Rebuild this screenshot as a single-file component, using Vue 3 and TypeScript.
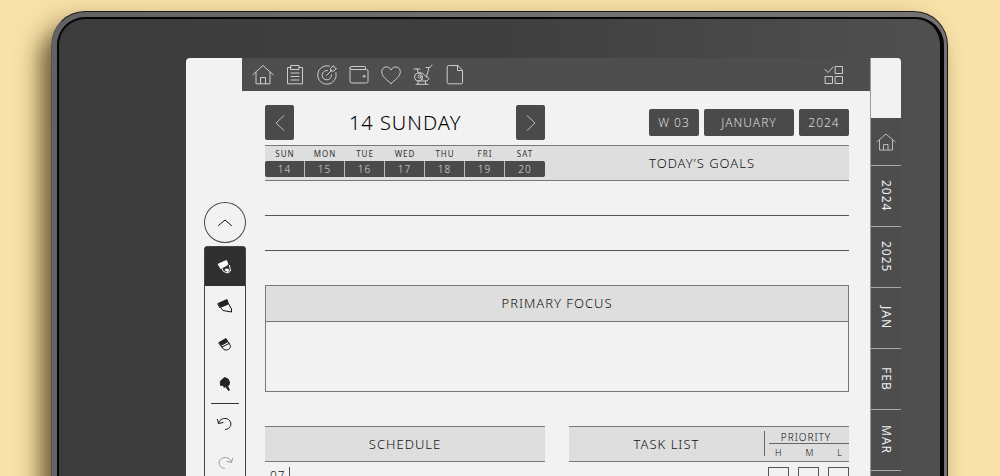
<script setup lang="ts">
import { ref } from 'vue'

interface Day { name: string; date: number }

const week: Day[] = [
  { name: 'SUN', date: 14 },
  { name: 'MON', date: 15 },
  { name: 'TUE', date: 16 },
  { name: 'WED', date: 17 },
  { name: 'THU', date: 18 },
  { name: 'FRI', date: 19 },
  { name: 'SAT', date: 20 },
]
const tabs: string[] = ['2024', '2025', 'JAN', 'FEB', 'MAR']
const pills: string[] = ['W 03', 'JANUARY', '2024']
const levels = ['H', 'M', 'L'] as const
const priority = ref<Record<string, boolean>>({ H: false, M: false, L: false })
</script>

<template>
  <div class="desk">
    <div class="device">
      <div class="surface">
        <main class="screen">
          <aside class="tools">
            <button class="collapse" aria-label="Collapse tools">
              <svg width="16" height="10" viewBox="0 0 16 10"><path d="M1.5 7.5 8 2l6.500 5.500" /></svg>
            </button>
            <div class="toolbox">
              <button class="tool selected" aria-label="Pen">
                <svg width="20" height="20" viewBox="0 0 20 20">
                  <path d="M3.500 7 11.500 3.500l1.500 4-7 4z" fill="#fff" stroke="#fff" />
                  <path d="m7 11.500 1.500 3 4.500 1.500 2.500-2-1-5.500" fill="#303030" stroke="#fff" />
                  <path d="m9.500 13 1.500-1.500 2.500.500 1 2-2 1z" fill="#fff" stroke="none" />
                </svg>
              </button>
              <button class="tool" aria-label="Highlighter">
                <svg width="20" height="20" viewBox="0 0 20 20">
                  <path d="M3 7.500 12 3.500l1.500 4.500-8.500 3.500z" fill="#222" stroke="#222" />
                  <path d="m6 12 2 2.500 8.500 1.500V13L14 8.500" />
                </svg>
              </button>
              <button class="tool" aria-label="Eraser">
                <svg width="20" height="20" viewBox="0 0 20 20">
                  <path d="M4 7.500 11 3.500l1.500 2.500-7 4z" fill="#222" stroke="#222" />
                  <path d="m6 10.500 7-4 2.300 4c1 3-3.300 6-6.300 4zM7 12l7-3.500" />
                </svg>
              </button>
              <button class="tool" aria-label="Select">
                <svg width="20" height="20" viewBox="0 0 20 20">
                  <path d="m5.500 7 4-3.500 3.500 1.500 1.500 3-.5 3-1.500 1 2 4-1 .500-3-4-1.500 1-.5-2.500-2.500.500z" fill="#222" stroke="#222" />
                </svg>
              </button>
              <hr class="tool-rule">
              <button class="tool" aria-label="Undo">
                <svg width="20" height="20" viewBox="0 0 20 20"><path d="M3.500 9C5 5 9 3.500 12.500 5s4.500 6 2 8.500c-1 1-2 1.700-4 2M2.500 5.500l1 4 4.500-1" /></svg>
              </button>
              <button class="tool faded" aria-label="Redo">
                <svg width="20" height="20" viewBox="0 0 20 20"><path d="M16.500 9C15 5 11 3.500 7.500 5s-4.500 6-2 8.500c1 1 2 1.700 4 2M17.500 5.500l-1 4-4.500-1" /></svg>
              </button>
            </div>
          </aside>

          <section class="page">
            <nav class="topbar" aria-label="Sections">
              <a href="#home" aria-label="Home">
                <svg width="22" height="22" viewBox="0 0 22 22"><path d="M.8 10.700 11 1.500l10.200 9.200M4 8.500v11.300h14V8.500M8.500 19.800v-6.300h5v6.300" /></svg>
              </a>
              <a href="#lists" aria-label="Lists">
                <svg width="22" height="22" viewBox="0 0 22 22"><path d="M7 3.500H3.500v16.300h15V3.500H15M7 1.500h8v4H7zM7 9h8M7 12.500h8M7 16h8" /></svg>
              </a>
              <a href="#targets" aria-label="Targets">
                <svg width="22" height="22" viewBox="0 0 22 22"><path d="M13.500 2A9.300 9.300 0 1 0 20 8.700M11.500 6.500a4.700 4.700 0 1 0 4 4.200M10.500 11.500l5-5M15 4l2.500-2.500.8 2.200 2.200.8L18 7h-3z" /></svg>
              </a>
              <a href="#budget" aria-label="Budget">
                <svg width="22" height="22" viewBox="0 0 22 22"><path d="M17.500 5.500V3.300q0-.8-.8-.8H4Q2 2.500 2 4V17q0 2 2 2h14.500q1.500 0 1.500-1.500V7q0-1.500-1.500-1.500H4Q2 5.500 2 4" /><circle cx="16" cy="12.300" r="1" /></svg>
              </a>
              <a href="#health" aria-label="Health">
                <svg width="22" height="22" viewBox="0 0 22 22"><path d="M11 19.500C7 16 1.700 12.500 1.700 7.800 1.700 2.500 8.500 1 11 6c2.500-5 9.300-3.500 9.300 1.800 0 4.700-5.300 8.200-9.300 11.700z" /></svg>
              </a>
              <a href="#workout" aria-label="Workout">
                <svg width="22" height="22" viewBox="0 0 22 22"><path d="M2 5h6M5 5l1.500 4M14 3.500h4L20 1M17 3.500 14.500 13M6.500 9C11 7.500 11 11 16 13.500c2 1 0 3.500-2.500 3.500H6.500M4 20.300h12M6 17.500v2.500M13.500 17v3" /><circle cx="6.500" cy="13" r="4" /><circle cx="7.500" cy="12.500" r="1.500" /><path d="m8.500 14 2 1.500" /></svg>
              </a>
              <a href="#notes" aria-label="Notes">
                <svg width="22" height="22" viewBox="0 0 22 22"><path d="M13.500 1.500H4.500q-1.300 0-1.300 1.300v15.700q0 1.300 1.300 1.300h12.700q1.300 0 1.300-1.300v-12zM13.500 1.500v5h5" /></svg>
              </a>
              <a class="last" href="#overview" aria-label="Overview">
                <svg width="22" height="22" viewBox="0 0 22 22"><path d="m2 5.500 3 3L10 3M12.500 2.500h7v7h-7zM2.500 12.500h7v7h-7zM12.500 12.500h7v7h-7z" /></svg>
              </a>
            </nav>

            <div class="content">
              <header class="heading">
                <div class="day">
                  <button class="arrow" aria-label="Previous day">
                    <svg width="12" height="18" viewBox="0 0 12 18"><path d="M10 1.500 2 9l8 7.500" /></svg>
                  </button>
                  <h1>14 SUNDAY</h1>
                  <button class="arrow" aria-label="Next day">
                    <svg width="12" height="18" viewBox="0 0 12 18"><path d="m2 1.500 8 7.500-8 7.500" /></svg>
                  </button>
                </div>
                <div class="pills">
                  <button v-for="p in pills" :key="p" class="pill">{{ p }}</button>
                </div>
              </header>

              <div class="band split">
                <div class="week">
                  <div v-for="d in week" :key="d.date" class="weekday">
                    <span>{{ d.name }}</span>
                    <a :href="`#day-${d.date}`">{{ d.date }}</a>
                  </div>
                </div>
                <h2 class="goals">TODAY’S GOALS</h2>
              </div>
              <div class="line"></div>
              <div class="line"></div>

              <section class="focus">
                <h2>PRIMARY FOCUS</h2>
                <div class="focus-body"></div>
              </section>

              <div class="split lower">
                <section>
                  <div class="band centred"><h2>SCHEDULE</h2></div>
                  <div class="hour"><span>07</span></div>
                </section>
                <section>
                  <div class="band tasks">
                    <h2>TASK LIST</h2>
                    <div class="priority">
                      <div class="priority-title">PRIORITY</div>
                      <div class="levels"><span v-for="l in levels" :key="l">{{ l }}</span></div>
                    </div>
                  </div>
                  <div class="checks">
                    <input v-for="l in levels" :key="l" v-model="priority[l]" type="checkbox" :aria-label="`Priority ${l}`">
                  </div>
                </section>
              </div>
            </div>
          </section>

          <nav class="tabs" aria-label="Calendar">
            <div class="blank"></div>
            <a class="tab home" href="#home" aria-label="Home">
              <svg width="20" height="20" viewBox="0 0 20 20"><path d="M1 9.700 10 2l9 7.700M3.500 8v10h13V8M7.500 18v-5.500h4.500V18" /></svg>
            </a>
            <a v-for="t in tabs" :key="t" class="tab" :href="`#${t}`">{{ t }}</a>
          </nav>
        </main>
      </div>
    </div>
  </div>
</template>

<style>
body {
  background: #f9e2a9;
}
</style>

<style scoped>
.desk {
  box-sizing: border-box;
  height: 100vh;
  padding: 11px 52px 0 51px;
  overflow: hidden;
  background: #f9e2a9;
  color: #111;
  font: 300 13px/18px "Noto Sans", "Open Sans", sans-serif;
}
.desk * {
  box-sizing: border-box;
}
.device {
  min-height: 120vh;
  padding: 5px 3px 0 5px;
  border: 1px solid #1c1c1c;
  border-left-color: #555;
  border-radius: 34px;
  background: linear-gradient(100deg, #626262, #707070 50%, #777173);
  box-shadow: -10px 16px 20px rgba(60, 45, 10, 0.65), -12px 5px 30px rgba(80, 60, 20, 0.2);
}
.surface {
  min-height: 120vh;
  padding: 39px 39px 0 127px;
  border: 2px solid #050505;
  border-right-width: 4px;
  border-radius: 28px;
  background: linear-gradient(90deg, #3c3c3c, #3f3f3f 50%, #505050);
}
.screen {
  display: flex;
  min-height: 120vh;
  border-radius: 4px;
  overflow: hidden;
  background: #f2f2f2;
}
svg {
  display: block;
  fill: none;
  stroke: currentColor;
  stroke-width: 1;
  stroke-linejoin: round;
  stroke-linecap: round;
}
button {
  display: flex;
  align-items: center;
  justify-content: center;
  padding: 0;
  border: 0;
  background: none;
  color: inherit;
  font: inherit;
}
a {
  color: inherit;
  text-decoration: none;
}
h1,
h2 {
  margin: 0;
  font-weight: 300;
  text-align: center;
}
h1 {
  font-size: 20px;
  line-height: 35px;
  letter-spacing: 1px;
  color: #000;
}
h2 {
  font-size: 13px;
  line-height: 34px;
  letter-spacing: 1px;
}

/* drawing tools */
.tools {
  display: flex;
  flex-direction: column;
  width: 56px;
  padding: 144px 0 0 18px;
  flex-shrink: 0;
}
.tools > * {
  width: 42px;
}
.collapse {
  height: 41px;
  margin-bottom: 3px;
  border: 1px solid #444;
  border-radius: 50%;
}
.toolbox {
  flex: 1;
  border: 1px solid #444;
  border-radius: 3px;
}
.tool {
  width: 100%;
  height: 39px;
}
.tool.selected {
  background: #303030;
}
.tool.faded {
  color: #999;
}
.tool-rule {
  height: 1px;
  margin: 0 6px;
  border: 0;
  background: #333;
}

/* planner page */
.page {
  flex: 1;
  min-width: 0;
}
.topbar {
  display: flex;
  align-items: center;
  gap: 10px;
  height: 33px;
  padding: 0 25px 0 10px;
  background: #4e4e4e;
  color: #ccc;
}
.topbar .last {
  margin-left: auto;
}
.content {
  padding: 14px 21px 0 23px;
}
.heading {
  display: flex;
  justify-content: space-between;
  align-items: center;
  margin-bottom: 5px;
}
.day {
  display: flex;
  justify-content: space-between;
  width: 48%;
}
.arrow {
  width: 29px;
  height: 35px;
  border-radius: 2px;
  background: #4a4a4a;
  color: #bbb;
}
.pills {
  display: grid;
  grid-template-columns: 50px 90px 50px;
  gap: 5px;
}
.pill {
  height: 27px;
  border-radius: 2px;
  background: #4a4a4a;
  color: #ddd;
  font-size: 12px;
  letter-spacing: 1px;
}
.split {
  display: grid;
  grid-template-columns: 1fr 1fr;
  column-gap: 24px;
}
.band {
  height: 36px;
  border: solid #777;
  border-width: 1px 0;
  background: #dedede;
}
.week {
  display: flex;
}
.weekday {
  flex: 1;
  text-align: center;
  font-weight: 400;
  letter-spacing: 1px;
}
.weekday span {
  display: block;
  color: #333;
  font-size: 8px;
  line-height: 15px;
}
.weekday a {
  display: block;
  border-right: 1px solid #bbb;
  background: #4a4a4a;
  color: #ddd;
  font-size: 10px;
  font-weight: 300;
  line-height: 16px;
}
.weekday:first-child a {
  border-radius: 2px 0 0 2px;
}
.weekday:last-child a {
  border-right: 0;
  border-radius: 0 2px 2px 0;
}
.goals {
  padding-right: 14px;
}
.line {
  height: 35px;
  border-bottom: 1px solid #555;
}
.focus {
  margin-top: 34px;
  border: 1px solid #777;
}
.focus h2 {
  height: 36px;
  border-bottom: 1px solid #777;
  background: #dedede;
}
.focus-body {
  height: 69px;
}
.lower {
  margin-top: 34px;
}
.hour {
  padding-top: 5px;
  font-size: 12px;
}
.hour span {
  display: inline-block;
  width: 25px;
  padding-left: 5px;
  border-right: 1px solid #555;
  letter-spacing: 1px;
}
.tasks {
  display: flex;
}
.tasks h2 {
  flex: 1;
}
.priority {
  width: 85px;
  height: 25px;
  margin-top: 4px;
  padding-left: 4px;
  border-left: 1px solid #666;
  letter-spacing: 1px;
}
.priority-title {
  padding-right: 6px;
  border-bottom: 1px solid #666;
  font-size: 10px;
  line-height: 12px;
  text-align: center;
}
.levels {
  display: flex;
  justify-content: space-between;
  padding: 0 6px;
  font-size: 9px;
  line-height: 17px;
}
.checks {
  display: flex;
  justify-content: flex-end;
  gap: 9px;
  padding-top: 5px;
}
.checks input {
  appearance: none;
  width: 21px;
  height: 21px;
  margin: 0;
  border: 1px solid #555;
}
.checks input:checked {
  background: #4a4a4a;
}

/* side tabs */
.tabs {
  width: 31px;
  flex-shrink: 0;
  border-left: 1px solid #999;
  background: #4d4d4d;
  color: #eee;
}
.blank {
  height: 60px;
  background: #f2f2f2;
}
.tab {
  display: flex;
  align-items: center;
  justify-content: center;
  width: 100%;
  height: 61px;
  border-bottom: 1px solid #aaa;
  font-size: 12px;
  font-weight: 400;
  letter-spacing: 1px;
  writing-mode: vertical-rl;
}
.tab.home {
  height: 48px;
  color: #bbb;
}
</style>
